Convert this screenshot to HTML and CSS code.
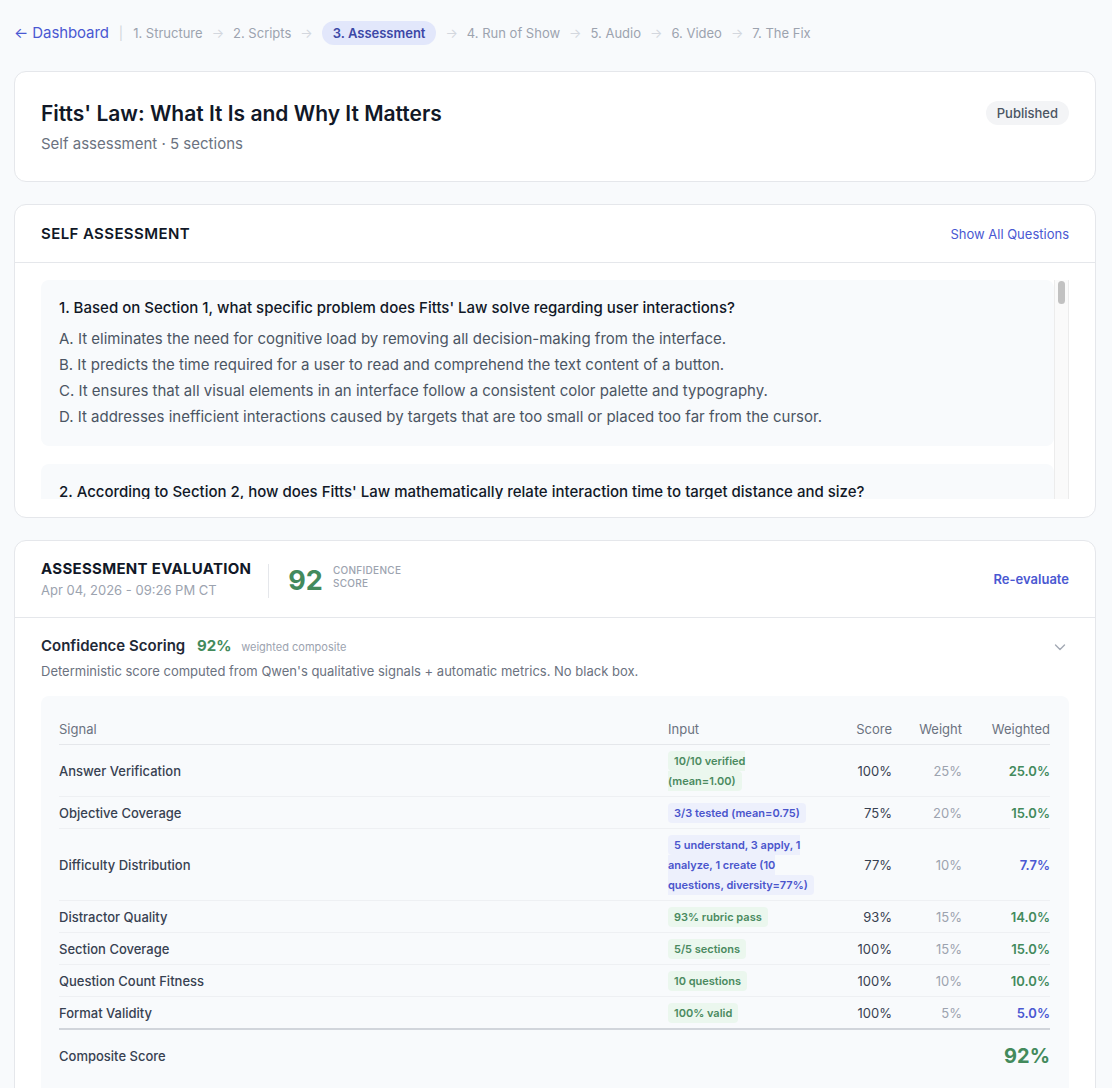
FILE: index.html
```html
<!DOCTYPE html>
<html lang="en">
<head>
  <meta charset="UTF-8" />
  <meta name="viewport" content="width=device-width, initial-scale=1.0"/>
  <title>Assessment · Fitts' Law</title>
  <link rel="stylesheet" href="styles.css">
</head>
<body>
  <!-- Step navigation -->
  <nav class="steps">
    <a class="back" href="#">← Dashboard</a>
    <span class="sep">|</span>
    <span class="step">1. Structure</span>
    <span class="arrow">→</span>
    <span class="step">2. Scripts</span>
    <span class="arrow">→</span>
    <span class="step active">3. Assessment</span>
    <span class="arrow">→</span>
    <span class="step">4. Run of Show</span>
    <span class="arrow">→</span>
    <span class="step">5. Audio</span>
    <span class="arrow">→</span>
    <span class="step">6. Video</span>
    <span class="arrow">→</span>
    <span class="step">7. The Fix</span>
  </nav>

  <!-- Title card -->
  <section class="card intro">
    <div>
      <h1>Fitts' Law: What It Is and Why It Matters</h1>
      <p class="sub">Self assessment · 5 sections</p>
    </div>
    <span class="status">Published</span>
  </section>

  <!-- Questions -->
  <section class="card">
    <div class="card-head">
      <h2>Self Assessment</h2>
      <a class="link" href="#">Show All Questions</a>
    </div>
    <div class="card-body">
      <div class="q-wrap">
        <div class="q-scroll">
          <div class="question">
            <p class="q-text">1. Based on Section 1, what specific problem does Fitts' Law solve regarding user interactions?</p>
            <ul class="options">
              <li>A. It eliminates the need for cognitive load by removing all decision-making from the interface.</li>
              <li>B. It predicts the time required for a user to read and comprehend the text content of a button.</li>
              <li>C. It ensures that all visual elements in an interface follow a consistent color palette and typography.</li>
              <li>D. It addresses inefficient interactions caused by targets that are too small or placed too far from the cursor.</li>
            </ul>
          </div>
          <div class="question">
            <p class="q-text">2. According to Section 2, how does Fitts' Law mathematically relate interaction time to target distance and size?</p>
            <ul class="options">
              <li>A. Time increases linearly with the number of targets on screen.</li>
              <li>B. Time grows with the log of distance divided by target width.</li>
              <li>C. Time decreases as the distance to the target increases.</li>
              <li>D. Time depends only on the color contrast of the target.</li>
            </ul>
          </div>
        </div>
        <div class="scrollbar"><div class="thumb"></div></div>
      </div>
    </div>
  </section>

  <!-- Evaluation -->
  <section class="card eval">
    <div class="card-head eval-head">
      <div class="eval-meta">
        <div>
          <h2>Assessment Evaluation</h2>
          <p class="date">Apr 04, 2026 - 09:26 PM CT</p>
        </div>
        <div class="score">
          <span class="score-num">92</span>
          <span class="score-label">Confidence<br>Score</span>
        </div>
      </div>
      <a class="link strong" href="#">Re-evaluate</a>
    </div>

    <div class="scoring">
      <div class="scoring-top">
        <h3>Confidence Scoring <span class="pct">92%</span> <span class="hint">weighted composite</span></h3>
        <svg class="chevron" width="14" height="14" viewBox="0 0 14 14" fill="none">
          <path d="M2.5 5l4.5 4.5L11.5 5" stroke="#a3a9b4" stroke-width="1.4" stroke-linecap="round" stroke-linejoin="round"/>
        </svg>
      </div>
      <p class="desc">Deterministic score computed from Qwen's qualitative signals + automatic metrics. No black box.</p>

      <div class="table-box">
        <table>
          <colgroup>
            <col>
            <col class="c-input">
            <col class="c-score">
            <col class="c-weight">
            <col class="c-weighted">
          </colgroup>
          <thead>
            <tr>
              <th>Signal</th>
              <th>Input</th>
              <th class="num">Score</th>
              <th class="num">Weight</th>
              <th class="num">Weighted</th>
            </tr>
          </thead>
          <tbody>
            <tr>
              <td class="name">Answer Verification</td>
              <td><span class="tag green">10/10 verified (mean=1.00)</span></td>
              <td class="num">100%</td>
              <td class="num w">25%</td>
              <td class="num wt green">25.0%</td>
            </tr>
            <tr>
              <td class="name">Objective Coverage</td>
              <td><span class="tag blue">3/3 tested (mean=0.75)</span></td>
              <td class="num">75%</td>
              <td class="num w">20%</td>
              <td class="num wt green">15.0%</td>
            </tr>
            <tr>
              <td class="name">Difficulty Distribution</td>
              <td><span class="tag blue">5 understand, 3 apply, 1 analyze, 1 create (10 questions, diversity=77%)</span></td>
              <td class="num">77%</td>
              <td class="num w">10%</td>
              <td class="num wt blue">7.7%</td>
            </tr>
            <tr>
              <td class="name">Distractor Quality</td>
              <td><span class="tag green">93% rubric pass</span></td>
              <td class="num">93%</td>
              <td class="num w">15%</td>
              <td class="num wt green">14.0%</td>
            </tr>
            <tr>
              <td class="name">Section Coverage</td>
              <td><span class="tag green">5/5 sections</span></td>
              <td class="num">100%</td>
              <td class="num w">15%</td>
              <td class="num wt green">15.0%</td>
            </tr>
            <tr>
              <td class="name">Question Count Fitness</td>
              <td><span class="tag green">10 questions</span></td>
              <td class="num">100%</td>
              <td class="num w">10%</td>
              <td class="num wt green">10.0%</td>
            </tr>
            <tr>
              <td class="name">Format Validity</td>
              <td><span class="tag green">100% valid</span></td>
              <td class="num">100%</td>
              <td class="num w">5%</td>
              <td class="num wt blue">5.0%</td>
            </tr>
          </tbody>
          <tfoot>
            <tr>
              <td class="name">Composite Score</td>
              <td></td>
              <td></td>
              <td></td>
              <td class="num total">92%</td>
            </tr>
          </tfoot>
        </table>
      </div>
    </div>
  </section>
</body>
</html>
```

FILE: styles.css
```css
:root {
  --bg: #f8fafc;
  --card: #ffffff;
  --border: #e5e7eb;
  --text: #111827;
  --muted: #6b7280;
  --faint: #9ca3af;
  --blue: #4a58d2;
  --green: #438a5c;
}

html {
  scrollbar-width: none;
}

body {
  margin: 0;
  padding: 20px 16px 40px 14px;
  background: var(--bg);
  color: var(--text);
  font-family: Inter, "Noto Sans", sans-serif;
}

/* steps */
.steps {
  display: flex;
  align-items: center;
  gap: 9px;
  height: 25px;
  margin-bottom: 26px;
  font-size: 13px;
}

.back {
  color: var(--blue);
  text-decoration: none;
  font-size: 15px;
  letter-spacing: -0.1px;
  margin-right: 1px;
}

.sep {
  color: #d1d5db;
  margin-right: 1px;
}

.step {
  color: #9ca3af;
}

.step.active {
  background: #e2e7fb;
  color: #3c47a6;
  font-weight: 600;
  padding: 4px 11px;
  border-radius: 13px;
}

.arrow {
  color: #d3d7de;
}

/* cards */
.card {
  background: var(--card);
  border: 1px solid var(--border);
  border-radius: 12px;
  margin-bottom: 22px;
}

.intro {
  display: flex;
  justify-content: space-between;
  align-items: flex-start;
  padding: 29px 26px 27px;
}

h1 {
  margin: 0;
  font-size: 21px;
  line-height: 26px;
  font-weight: 600;
}

.sub {
  margin: 7px 0 0;
  font-size: 15px;
  line-height: 20px;
  color: var(--muted);
}

.status {
  background: #f3f4f6;
  color: #4b5563;
  font-size: 13px;
  font-weight: 500;
  line-height: 24px;
  padding: 0 11px;
  border-radius: 12px;
}

.card-head {
  display: flex;
  justify-content: space-between;
  align-items: center;
  height: 57px;
  padding: 0 26px;
  border-bottom: 1px solid var(--border);
}

h2 {
  margin: 0;
  font-size: 15px;
  font-weight: 600;
  text-transform: uppercase;
  letter-spacing: 0.4px;
}

.link {
  color: var(--blue);
  font-size: 13px;
  text-decoration: none;
}

.card-body {
  padding: 17px 26px 18px;
}

/* question list with its scrollbar */
.q-wrap {
  display: flex;
  height: 219px;
}

.q-scroll {
  flex: 1;
  overflow: hidden;
  display: flex;
  flex-direction: column;
  gap: 18px;
}

.scrollbar {
  width: 13px;
  background: #fafafa;
  border-left: 1px solid #ececec;
  border-right: 1px solid #ececec;
}

.thumb {
  height: 23px;
  margin: 1px 3px 0;
  border-radius: 4px;
  background: #c1c1c1;
}

.question {
  flex-shrink: 0;
  background: var(--bg);
  border-radius: 8px;
  padding: 17px 18px 16px;
}

.q-text {
  margin: 0;
  font-size: 15px;
  line-height: 22px;
  font-weight: 500;
}

.options {
  list-style: none;
  margin: 7px 0 0;
  padding: 0;
  font-size: 15px;
  line-height: 26px;
  color: #4b5563;
}

/* evaluation */
.eval-head {
  height: 76px;
}

.eval-meta {
  display: flex;
  align-items: center;
}

.eval-meta h2 {
  font-weight: 700;
  line-height: 18px;
  letter-spacing: 0.3px;
}

.date {
  margin: 4px 0 0;
  font-size: 13px;
  line-height: 16px;
  color: var(--faint);
}

.score {
  display: flex;
  align-items: center;
  gap: 10px;
  margin-left: 17px;
  padding-left: 19px;
  height: 34px;
  border-left: 1px solid var(--border);
  margin-top: 3px;
}

.score-num {
  font-size: 27px;
  font-weight: 700;
  color: var(--green);
}

.score-label {
  font-size: 10px;
  line-height: 13px;
  font-weight: 500;
  letter-spacing: 0.3px;
  text-transform: uppercase;
  color: var(--faint);
  margin-top: -7px;
}

.link.strong {
  font-weight: 600;
}

.scoring {
  padding: 18px 26px 30px;
}

.scoring-top {
  display: flex;
  justify-content: space-between;
  align-items: center;
}

h3 {
  margin: 0;
  font-size: 15px;
  line-height: 20px;
  font-weight: 600;
  color: #1f2937;
}

.pct {
  color: var(--green);
  font-weight: 700;
  margin-left: 8px;
}

.hint {
  font-size: 11px;
  font-weight: 400;
  color: var(--faint);
  margin-left: 6px;
}

.chevron {
  margin-right: 2px;
}

.desc {
  margin: 5px 0 0;
  font-size: 13px;
  line-height: 18px;
  color: var(--muted);
}

.table-box {
  margin-top: 16px;
  background: var(--bg);
  border-radius: 8px;
  padding: 15px 19px 18px 18px;
}

table {
  width: 100%;
  border-collapse: collapse;
  table-layout: fixed;
  font-size: 13px;
  color: #374151;
}

.c-input { width: 162px; }
.c-score { width: 62px; }
.c-weight { width: 70px; }
.c-weighted { width: 88px; }

th {
  text-align: left;
  font-weight: 400;
  color: var(--muted);
  padding: 10px 0 7px;
  border-bottom: 1px solid var(--border);
}

td {
  padding: 6px 0 5px;
  border-bottom: 1px solid #eef0f3;
  vertical-align: middle;
}

td:nth-child(2) {
  padding-right: 14px;
}

.num {
  text-align: right;
}

.name {
  font-weight: 500;
  color: #374151;
}

.tag {
  font-size: 11px;
  line-height: 20px;
  font-weight: 600;
  padding: 3px 6px;
  border-radius: 4px;
}

.tag.green {
  color: #4a8a5f;
  background: #ebf7ee;
}

.tag.blue {
  color: #4a55cc;
  background: #edf0fc;
}

.w {
  color: var(--faint);
}

.wt {
  font-weight: 600;
}

.wt.green { color: var(--green); }
.wt.blue { color: var(--blue); }

tbody tr:last-child td {
  border-bottom: 2px solid #d1d5db;
}

tfoot td {
  border-bottom: none;
  padding: 14px 0;
  font-weight: 600;
}

.total {
  font-size: 20px;
  font-weight: 700;
  color: var(--green);
}
```
